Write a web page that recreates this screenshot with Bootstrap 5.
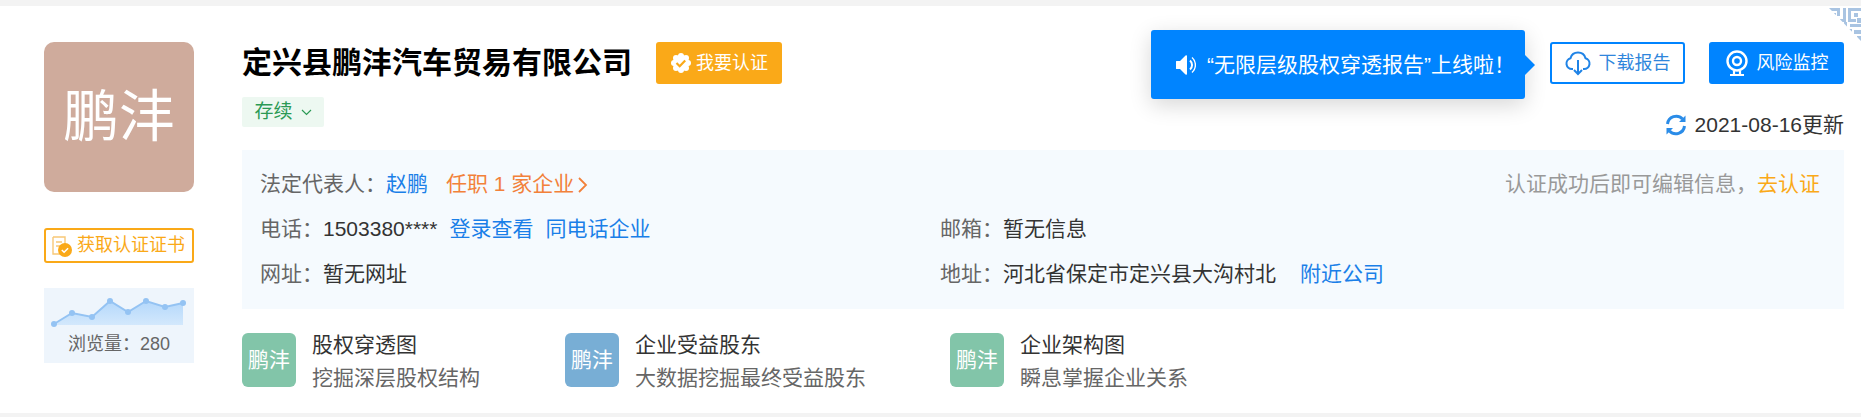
<!DOCTYPE html>
<html lang="zh">
<head>
<meta charset="utf-8">
<title>定兴县鹏沣汽车贸易有限公司</title>
<link href="https://cdn.jsdelivr.net/npm/bootstrap@5.3.0/dist/css/bootstrap.min.css" rel="stylesheet">
<style>
html,body{height:417px;overflow:hidden}
body{background:#f3f3f3;font-family:"Liberation Sans","Noto Sans CJK SC",sans-serif;font-size:21px;color:#333}
a{text-decoration:none;color:#1a7fe8}
.sheet{position:relative;margin-top:6px;height:407px;background:#fff;padding:36px 17px 0 44px;overflow:hidden}
.aside{width:150px;margin-right:48px}
.logo-tile{width:150px;height:150px;background:#cfab9c;color:#fff;border-radius:10px;font-size:56px;line-height:150px;text-align:center;white-space:nowrap}
.cert-btn{height:35px;margin-top:36px;border:2px solid #faa918;border-radius:3px;color:#faa918;font-size:18px;white-space:nowrap;padding-right:2px}
.views{height:75px;margin-top:25px;background:#eef5fc;color:#666;font-size:18px;text-align:center;padding-top:4px;line-height:24px}
.views svg{display:block}
.main-col{min-width:0}
.co-name{font-size:30px;font-weight:700;color:#000;line-height:40px;margin:0}
.verify-btn{width:126px;height:42px;margin-left:24px;background:#faa918;color:#fff;border-radius:3px;font-size:18px}
.state-tag{width:82px;height:30px;margin-top:13px;background:#edf8f1;color:#2b9a55;font-size:19px;border-radius:2px}
.act-btn{width:135px;height:42px;border-radius:3px;font-size:18px;border:2px solid #0084ff}
.act-line{color:#2f86dc;background:#fff;margin-right:24px}
.act-fill{color:#fff;background:#0084ff}
.update-line{height:40px;margin-top:21px;font-size:21px;color:#333}
.info-box{height:159px;margin-top:5px;background:#f5fafe;padding:11px 18px 0}
.info-row{height:45px;line-height:45px;white-space:nowrap}
.lbl{color:#666}
.col-a{width:680px}
.hot{color:#f2813a;margin-left:18px}
.mute{color:#999;margin-right:6px}
.gold{color:#faa918}
.gap-l{margin-left:12px}
.tools{margin-top:24px}
.tool-item{height:54px}
.tool-tile{width:54px;height:54px;border-radius:6px;color:#fff;font-size:21px;line-height:54px;text-align:center;margin-right:16px;white-space:nowrap}
.tile-g{background:#82c5a9}
.tile-b{background:#78aed5}
.tool-t{font-size:21px;line-height:24px;color:#333;white-space:nowrap}
.tool-s{font-size:21px;line-height:24px;color:#666;margin-top:9px;white-space:nowrap}
.w-1{width:323px}
.w-2{width:385px}
.pop{position:absolute;left:1151px;top:24px;width:374px;height:69px;background:#0084ff;color:#fff;border-radius:3px;font-size:21px;padding-left:24px;box-shadow:0 6px 22px rgba(0,0,0,.16);white-space:nowrap}
.pop:after{content:"";position:absolute;left:100%;top:25px;border:10px solid transparent;border-left-color:#0084ff;border-right-width:0}
.pop svg{margin-right:11px}
.qr-corner{position:absolute;right:0;top:1px}
</style>
</head>
<body>
<div class="sheet d-flex">
  <svg class="qr-corner" width="32" height="36" viewBox="0 0 32 36"><defs><clipPath id="tri"><path d="M0 1H32V34Z"/></clipPath></defs><g clip-path="url(#tri)" fill="#a9c4e2"><path d="M0 1h11v3H0zM8 4h3v5H8zM4 6h3v4H4zM14 1h3v11h-3zM19 1h13v3H19zM19 4h3v8h-3zM25 6h4v4h-4zM19 12h8v3h-8zM11 12h6v3h-6zM15 15h3v5h-3zM21 17h11v3H21zM28 11h4v5h-4zM20 22h3v5h-3zM25 23h7v4h-7zM28 29h4v5h-4z"/></g></svg>
  <div class="aside flex-shrink-0">
    <div class="logo-tile">鹏沣</div>
    <div class="cert-btn d-flex align-items-center justify-content-center">
      <svg width="22" height="24" viewBox="0 0 22 24" class="me-1"><path d="M2 3h12v8M2 3v17h7M5 8h6M5 12h4" fill="none" stroke="#f8c877" stroke-width="1.4"/><circle cx="14" cy="16" r="7" fill="#faa918"/><path d="M10.8 16l2.3 2.3 4-4" fill="none" stroke="#fff" stroke-width="1.5"/></svg>获取认证证书
    </div>
    <div class="views">
      <svg width="150" height="40" viewBox="0 0 150 40"><defs><linearGradient id="fade" x1="0" y1="0" x2="0" y2="1"><stop offset="0" stop-color="#b4d8fb"/><stop offset="1" stop-color="#d3e8fc"/></linearGradient></defs><path d="M10 33L28 21 48 25 66 9 84 20 102 9 121 15 139 11V33Z" fill="url(#fade)"/><path d="M10 32L28 21 48 25 66 9 84 20 102 9 121 15 139 11" fill="none" stroke="#94c3f3" stroke-width="2"/><g fill="#94c3f3"><circle cx="10" cy="32" r="3"/><circle cx="28" cy="21" r="3"/><circle cx="48" cy="25" r="3"/><circle cx="66" cy="9" r="3"/><circle cx="84" cy="20" r="3"/><circle cx="102" cy="9" r="3"/><circle cx="121" cy="15" r="3"/><circle cx="139" cy="11" r="3"/></g></svg>
      浏览量：280
    </div>
  </div>
  <div class="main-col flex-grow-1">
    <div class="d-flex justify-content-between">
      <div>
        <div class="d-flex align-items-center">
          <h1 class="co-name">定兴县鹏沣汽车贸易有限公司</h1>
          <div class="verify-btn d-flex align-items-center justify-content-center">
            <svg width="22" height="22" viewBox="0 0 22 22" class="me-1"><g fill="#fff"><circle cx="11" cy="11" r="8"/><circle cx="11" cy="4" r="3"/><circle cx="11" cy="18" r="3"/><circle cx="4" cy="11" r="3"/><circle cx="18" cy="11" r="3"/><circle cx="6" cy="6" r="3"/><circle cx="16" cy="6" r="3"/><circle cx="6" cy="16" r="3"/><circle cx="16" cy="16" r="3"/></g><path d="M6.500 11l3.200 3.200 5.500-5.700" fill="none" stroke="#faa918" stroke-width="2.200"/></svg>我要认证
          </div>
        </div>
        <div class="state-tag d-flex align-items-center justify-content-center">存续<svg class="ms-2" width="11" height="7" viewBox="0 0 11 7"><path d="M1 1l4.500 4.500L10 1" fill="none" stroke="#2b9a55" stroke-width="1.200"/></svg></div>
      </div>
      <div class="text-end">
        <div class="d-flex">
          <div class="act-btn act-line d-flex align-items-center justify-content-center">
            <svg width="26" height="26" viewBox="0 0 26 26" class="me-2"><path d="M8 19H7a5.500 5.500 0 0 1-1.500-10.800A7.800 7.800 0 0 1 20.500 8.200 5.500 5.500 0 0 1 19 19h-1" fill="none" stroke="#1f83e6" stroke-width="2"/><path d="M13 10v14M9 20l4 4 4-4" fill="none" stroke="#1f83e6" stroke-width="2"/></svg>下载报告
          </div>
          <div class="act-btn act-fill d-flex align-items-center justify-content-center">
            <svg width="24" height="26" viewBox="0 0 24 26" class="me-2"><circle cx="12" cy="11" r="9.500" fill="none" stroke="#fff" stroke-width="2.400"/><circle cx="12" cy="11" r="4" fill="none" stroke="#fff" stroke-width="2.400"/><path d="M9 21v3M15 21v3M5 25h14" fill="none" stroke="#fff" stroke-width="2.200"/></svg>风险监控
          </div>
        </div>
        <div class="update-line d-flex align-items-center justify-content-end">
          <svg width="22" height="24" viewBox="0 0 22 24" class="me-2"><path d="M2.500 11A8.700 8.700 0 0 1 17.500 6M19.500 13A8.700 8.700 0 0 1 4.500 18" fill="none" stroke="#2a8ce8" stroke-width="3"/><path d="M20.500 2.500v6.500h-6.500zM1.500 21.500v-6.500h6.500z" fill="#2a8ce8"/></svg>2021-08-16更新
        </div>
      </div>
    </div>
    <div class="info-box">
      <div class="info-row d-flex justify-content-between">
        <div><span class="lbl">法定代表人：</span><a href="#">赵鹏</a><span class="hot">任职 1 家企业<svg class="ms-1" width="10" height="16" viewBox="0 0 10 16"><path d="M1 1l7 7-7 7" fill="none" stroke="#f2813a" stroke-width="1.800"/></svg></span></div>
        <div class="mute">认证成功后即可编辑信息，<span class="gold">去认证</span></div>
      </div>
      <div class="info-row d-flex">
        <div class="col-a"><span class="lbl">电话：</span>1503380****<a class="gap-l" href="#">登录查看</a><a class="gap-l" href="#">同电话企业</a></div>
        <div><span class="lbl">邮箱：</span>暂无信息</div>
      </div>
      <div class="info-row d-flex">
        <div class="col-a"><span class="lbl">网址：</span>暂无网址</div>
        <div><span class="lbl">地址：</span>河北省保定市定兴县大沟村北<a class="ms-4" href="#">附近公司</a></div>
      </div>
    </div>
    <div class="tools d-flex">
      <div class="tool-item w-1 d-flex"><div class="tool-tile tile-g">鹏沣</div><div><div class="tool-t">股权穿透图</div><div class="tool-s">挖掘深层股权结构</div></div></div>
      <div class="tool-item w-2 d-flex"><div class="tool-tile tile-b">鹏沣</div><div><div class="tool-t">企业受益股东</div><div class="tool-s">大数据挖掘最终受益股东</div></div></div>
      <div class="tool-item d-flex"><div class="tool-tile tile-g">鹏沣</div><div><div class="tool-t">企业架构图</div><div class="tool-s">瞬息掌握企业关系</div></div></div>
    </div>
  </div>
  <div class="pop d-flex align-items-center">
    <svg width="21" height="20" viewBox="0 0 21 20"><path d="M1 6.500Q1 6 1.500 6H5l5.500-5.500Q12 0 12 1v18q0 1-1.500.5L5 14H1.500Q1 14 1 13.500z" fill="#fff"/><path d="M15 5.500a6 6 0 0 1 0 9" fill="none" stroke="#fff" stroke-width="2"/><path d="M17 2.500a10 10 0 0 1 0 15" fill="none" stroke="#fff" stroke-width="1.400"/></svg>“无限层级股权穿透报告”上线啦！
  </div>
</div>
</body>
</html>
